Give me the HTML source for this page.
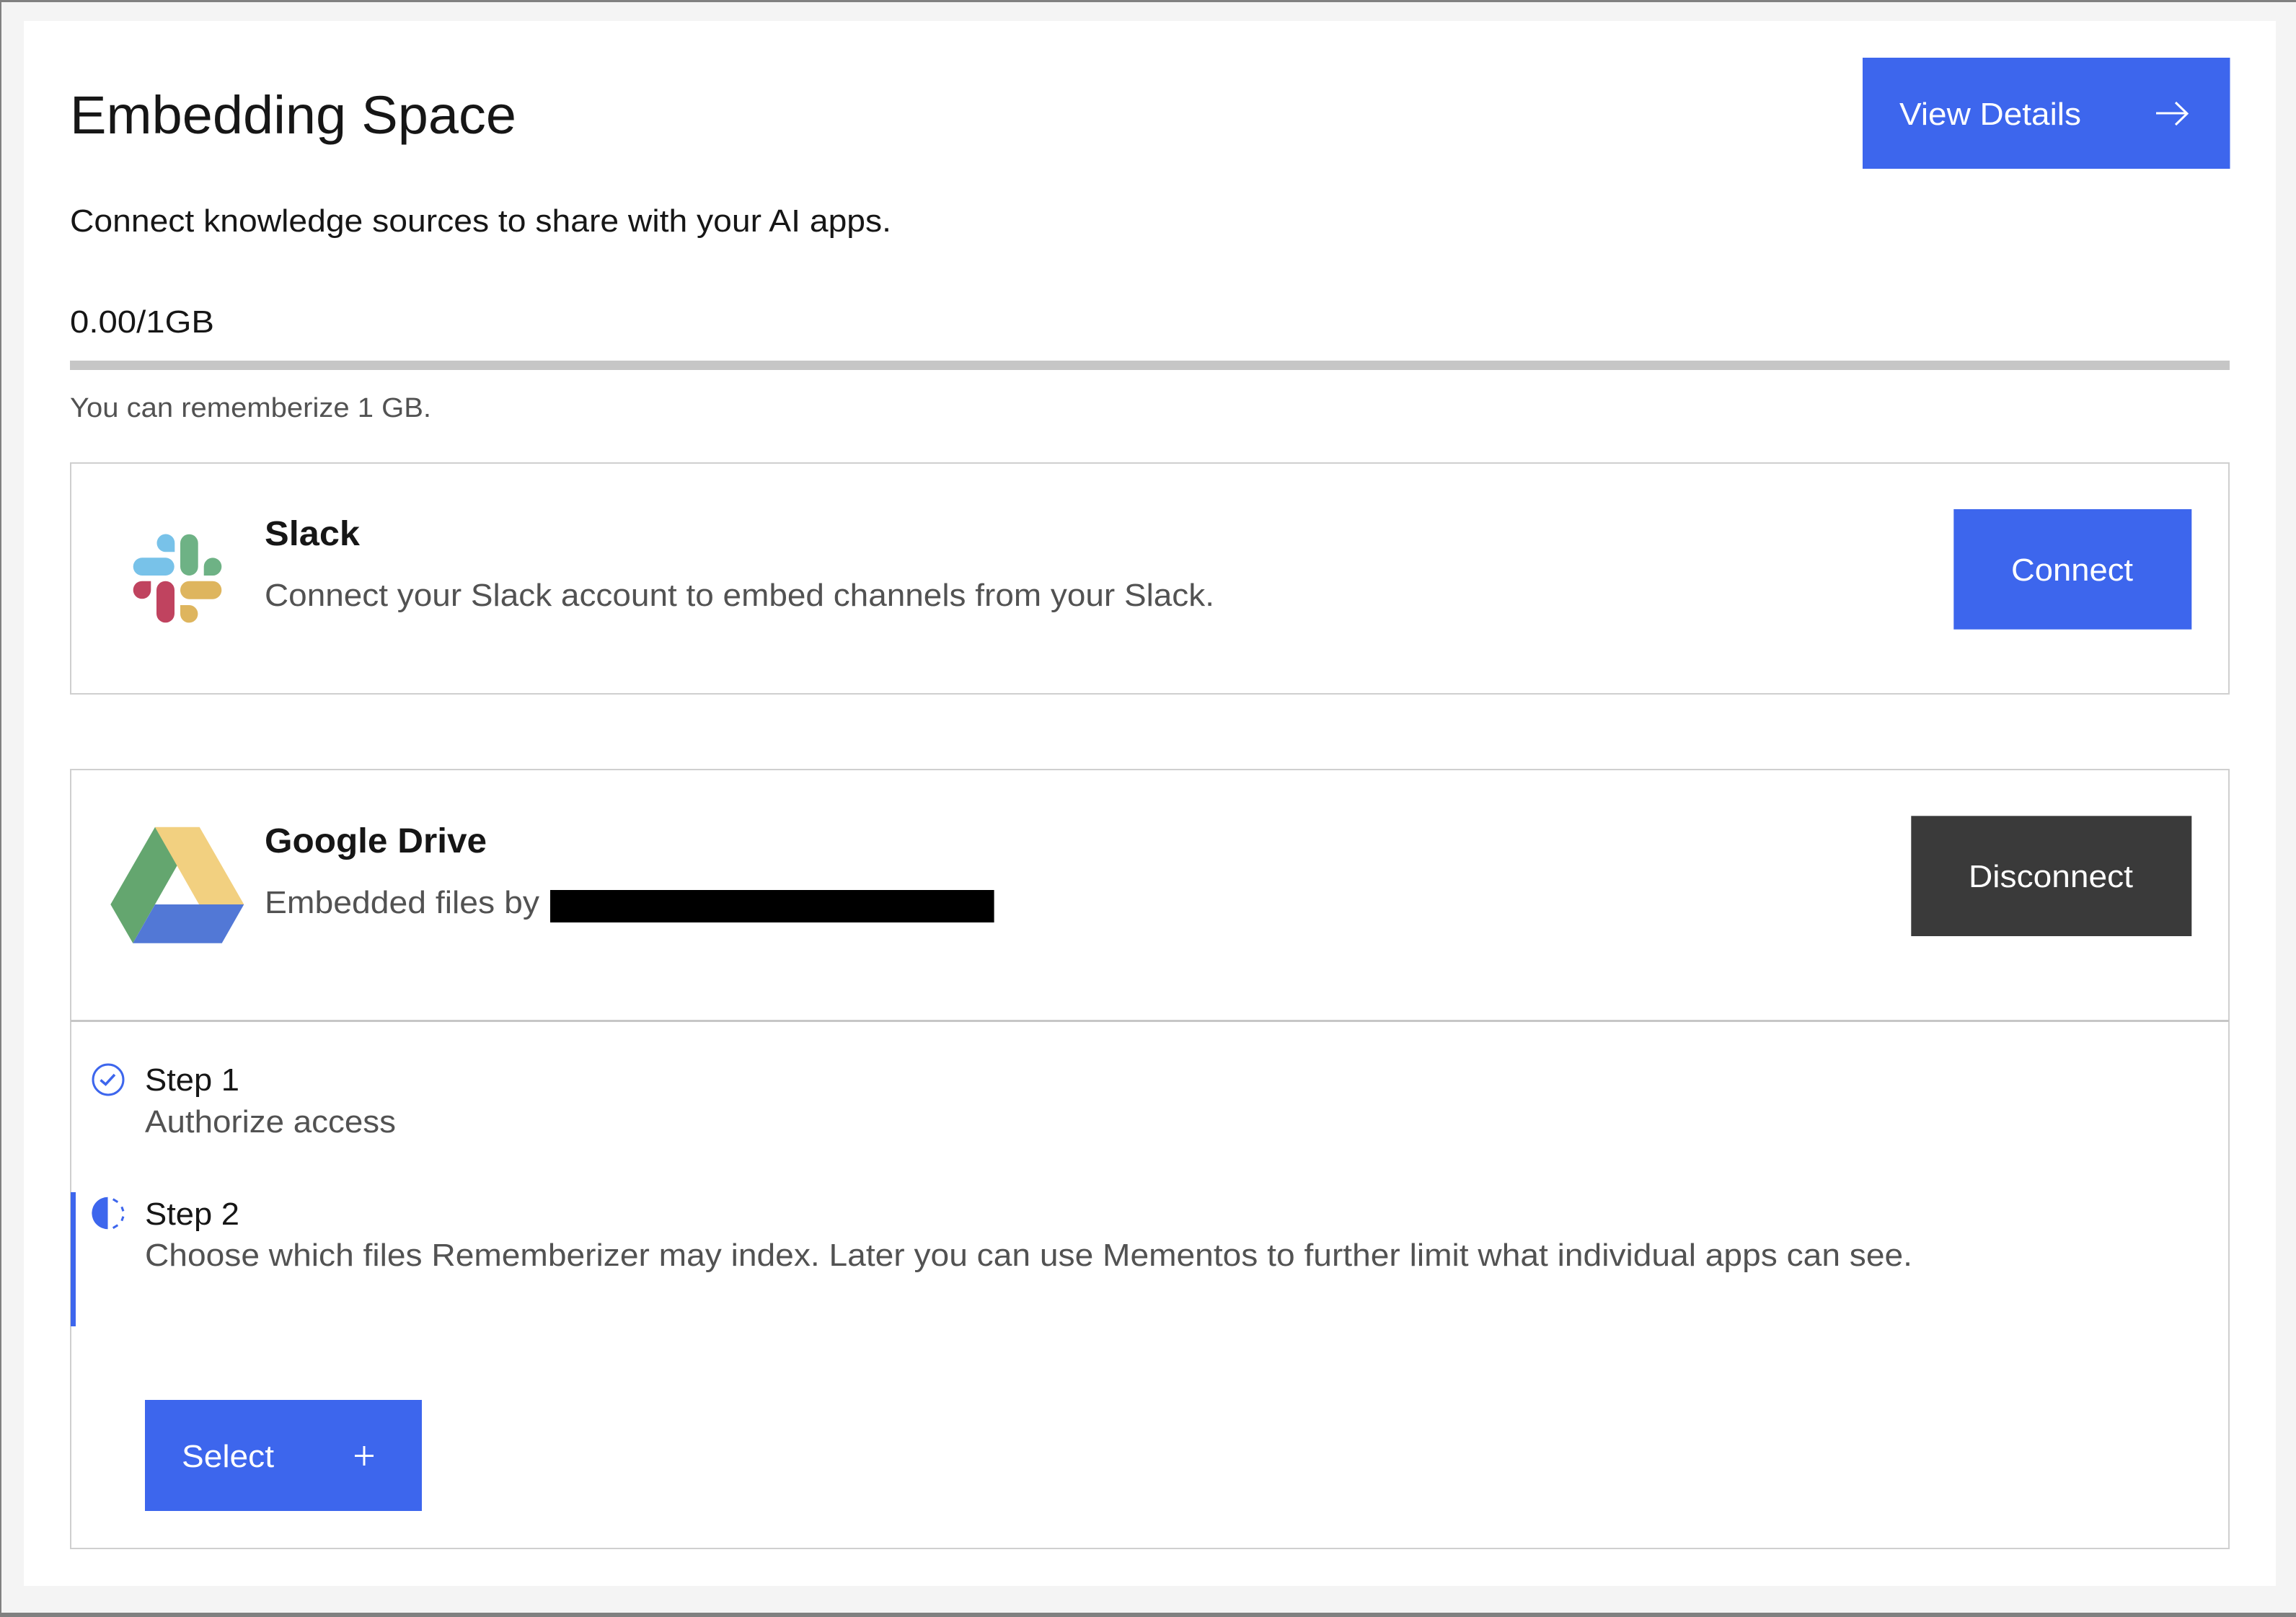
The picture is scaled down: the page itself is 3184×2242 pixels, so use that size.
<!DOCTYPE html>
<html lang="en">
<head>
<meta charset="utf-8">
<title>Embedding Space</title>
<style>
html,body{margin:0;padding:0;width:3184px;height:2242px;overflow:hidden;background:#f4f4f4}
svg{display:block;position:absolute;left:0;top:0}
text{font-family:"Liberation Sans",Arial,sans-serif;white-space:pre}
.d{fill:#161616}
.g{fill:#525252}
.w{fill:#ffffff}
.b{font-weight:700}
</style>
</head>
<body>
<svg width="3184" height="2242" viewBox="0 0 3184 2242" xmlns="http://www.w3.org/2000/svg">
  <rect x="0" y="0" width="3184" height="2242" fill="#f4f4f4"/>
  <rect x="0" y="0" width="3184" height="3" fill="#808080"/>
  <rect x="0" y="2236" width="3184" height="6" fill="#808080"/>
  <rect x="0" y="0" width="2" height="2242" fill="#808080"/>
  <rect x="33" y="29" width="3123" height="2170" fill="#ffffff"/>

  <text class="d" x="97" y="185" font-size="74" textLength="619" lengthAdjust="spacingAndGlyphs">Embedding Space</text>
  <text class="d" x="97" y="321" font-size="44" textLength="1139" lengthAdjust="spacingAndGlyphs">Connect knowledge sources to share with your AI apps.</text>
  <text class="d" x="97" y="461" font-size="44" textLength="200" lengthAdjust="spacingAndGlyphs">0.00/1GB</text>
  <rect x="97" y="500" width="2995" height="13" fill="#c6c6c6"/>
  <text class="g" x="97" y="578" font-size="38" textLength="501" lengthAdjust="spacingAndGlyphs">You can rememberize 1 GB.</text>

  <rect x="2583" y="80" width="509.500" height="154" fill="#3d66ed"/>
  <text class="w" x="2634" y="173" font-size="44" textLength="252" lengthAdjust="spacingAndGlyphs">View Details</text>
  <path d="M2990 157H3033M3017 142L3033 157.500L3017 173" fill="none" stroke="#ffffff" stroke-width="3"/>

  <!-- Slack card -->
  <rect x="98" y="642" width="2993" height="320" fill="#ffffff" stroke="#cfcfcf" stroke-width="2"/>
  <g>
    <path d="M242.300 765.300H229.800A12.400 12.400 0 1 1 242.300 752.900Z" fill="#78c2e9"/>
    <rect x="184.700" y="773.300" width="57" height="24.700" rx="12.350" fill="#78c2e9"/>
    <rect x="250" y="740.700" width="24.700" height="57.300" rx="12.350" fill="#6eb285"/>
    <path d="M282.700 798V785.600A12.300 12.300 0 1 1 295 798Z" fill="#6eb285"/>
    <path d="M209.300 805.700V818A12.300 12.300 0 1 1 197 805.700Z" fill="#c0435f"/>
    <rect x="217" y="805.700" width="25" height="57.600" rx="12.500" fill="#c0435f"/>
    <rect x="250" y="805.700" width="57.300" height="25" rx="12.500" fill="#deb55e"/>
    <path d="M250 839H262.400A12.200 12.200 0 1 1 250 851.200Z" fill="#deb55e"/>
  </g>
  <text class="d b" x="367" y="756" font-size="48" textLength="132" lengthAdjust="spacingAndGlyphs">Slack</text>
  <text class="g" x="367" y="840" font-size="44" textLength="1317" lengthAdjust="spacingAndGlyphs">Connect your Slack account to embed channels from your Slack.</text>
  <rect x="2709.300" y="706" width="330" height="166.700" fill="#3d66ed"/>
  <text class="w" x="2789" y="805" font-size="44" textLength="169" lengthAdjust="spacingAndGlyphs">Connect</text>

  <!-- Google Drive card -->
  <rect x="98" y="1067" width="2993" height="1080" fill="#ffffff" stroke="#cfcfcf" stroke-width="2"/>
  <path d="M215 1146.700L245.700 1200L184.300 1307.700L153.300 1254Z" fill="#64a66f"/>
  <path d="M215 1146.700H276.700L338.300 1254H276Z" fill="#f2d080"/>
  <path d="M215 1254H338.300L307.700 1307.700H184.300Z" fill="#5278d6"/>
  <text class="d b" x="367" y="1182" font-size="48" textLength="308" lengthAdjust="spacingAndGlyphs">Google Drive</text>
  <text class="g" x="367" y="1266" font-size="44" textLength="381" lengthAdjust="spacingAndGlyphs">Embedded files by</text>
  <rect x="763" y="1234" width="615.600" height="45" fill="#000000"/>
  <rect x="2650.300" y="1131.300" width="389" height="166.700" fill="#3a3a3a"/>
  <text class="w" x="2730" y="1230" font-size="44" textLength="228" lengthAdjust="spacingAndGlyphs">Disconnect</text>
  <rect x="98" y="1414" width="2993" height="3" fill="#c6c6c6"/>

  <!-- Step 1 -->
  <circle cx="150" cy="1497" r="21" fill="none" stroke="#3d66ed" stroke-width="3"/>
  <path d="M139.500 1497.500L146.500 1503.500L159 1490" fill="none" stroke="#3d66ed" stroke-width="3.500"/>
  <text class="d" x="201" y="1512" font-size="44" textLength="131" lengthAdjust="spacingAndGlyphs">Step 1</text>
  <text class="g" x="201" y="1570" font-size="44" textLength="348" lengthAdjust="spacingAndGlyphs">Authorize access</text>

  <!-- Step 2 -->
  <rect x="98" y="1653" width="7" height="186" fill="#3d66ed"/>
  <path d="M149.500 1659.800A22.200 22.200 0 0 0 149.500 1704.200Z" fill="#3d66ed"/>
  <path d="M156.700 1662.700L163.300 1666.700M168.800 1673.300L171 1679.300M171 1686.700L168.800 1692.700M163.300 1698.700L156.700 1702.700" fill="none" stroke="#3d66ed" stroke-width="3"/>
  <text class="d" x="201" y="1698" font-size="44" textLength="131" lengthAdjust="spacingAndGlyphs">Step 2</text>
  <text class="g" x="201" y="1755" font-size="44" textLength="2451" lengthAdjust="spacingAndGlyphs">Choose which files Rememberizer may index. Later you can use Mementos to further limit what individual apps can see.</text>

  <rect x="201" y="1941" width="384" height="154" fill="#3d66ed"/>
  <text class="w" x="252" y="2034" font-size="44" textLength="128" lengthAdjust="spacingAndGlyphs">Select</text>
  <path d="M505 2005V2032M492 2018.500H518" fill="none" stroke="#ffffff" stroke-width="3"/>
</svg>
</body>
</html>
